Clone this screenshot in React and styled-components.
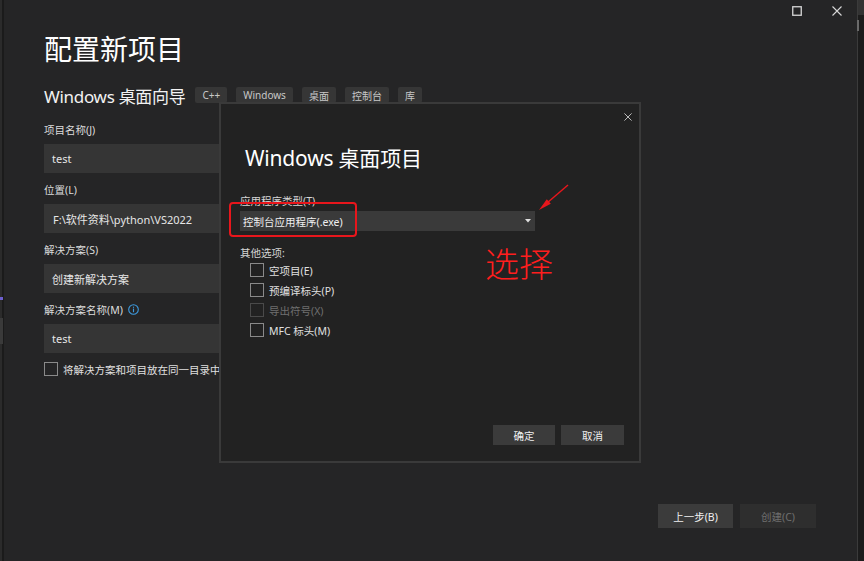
import React from "react";
import styled, { createGlobalStyle } from "styled-components";

const GlobalStyle = createGlobalStyle`
  html, body { margin: 0; padding: 0; background: #252526; }
  body {
    font-family: "Noto Sans", "Noto Sans CJK SC", sans-serif;
    color: #e8e8e8;
  }
  * { box-sizing: border-box; }
`;

const Window = styled.div`
  position: relative;
  display: flex;
  width: 864px;
  height: 561px;
  overflow: hidden;
  background: #252526;
`;

const LeftGutter = styled.div`
  position: relative;
  width: 4px;
  flex: none;
  background: linear-gradient(to right, #2b2b2b 0 2px, #1b1b1b 2px 4px);
`;

const GutterMark = styled.div`
  position: absolute;
  left: 0;
  width: 3px;
  top: ${(p) => p.$top}px;
  height: ${(p) => p.$h}px;
  background: ${(p) => p.$color};
`;

const Main = styled.div`
  flex: 1;
  display: flex;
  flex-direction: column;
  padding-left: 40px;
  min-width: 0;
`;

const ScrollTrack = styled.div`
  position: relative;
  width: 7px;
  flex: none;
  background: #1c1c1c;
  border-left: 1px solid #3b3b3b;
`;

const ScrollCap = styled.div`
  height: 15px;
  background: #333333;
`;

const ScrollThumb = styled.div`
  position: absolute;
  left: -1px;
  top: 20px;
  width: 2px;
  height: 11px;
  background: #6a6a6a;
`;

const TitleBar = styled.div`
  display: flex;
  justify-content: flex-end;
  height: 21px;
`;

const CaptionButton = styled.div`
  width: 40px;
  height: 21px;
  display: flex;
  align-items: center;
  justify-content: center;
  color: #d8d8d8;
`;

const Heading = styled.h1`
  margin: 8px 0 0;
  font-size: 28px;
  line-height: 40px;
  font-weight: 400;
  color: #ffffff;
`;

const SubRow = styled.div`
  display: flex;
  align-items: center;
  height: 24px;
  margin-top: 14px;
`;

const SubTitle = styled.div`
  font-size: 17px;
  letter-spacing: -0.3px;
  color: #f2f2f2;
  margin-right: 10px;
`;

const Tags = styled.div`
  display: flex;
  gap: 9px;
`;

const Tag = styled.span`
  height: 16px;
  padding: 0 7px;
  display: inline-flex;
  align-items: center;
  background: #363636;
  border-radius: 2px;
  font-size: 10px;
  color: #c8c8c8;
`;

const Form = styled.div`
  display: flex;
  flex-direction: column;
  gap: 8px;
  margin-top: 14px;
`;

const Field = styled.div`
  display: flex;
  flex-direction: column;
`;

const FieldLabel = styled.div`
  display: flex;
  align-items: center;
  gap: 5px;
  height: 16px;
  margin-bottom: 7px;
  font-size: 10.5px;
  color: #dcdcdc;
`;

const TextBox = styled.div`
  width: 480px;
  height: 29px;
  display: flex;
  align-items: center;
  padding-left: ${(p) => p.$pad || 8}px;
  background: #353535;
  font-size: 11px;
  color: #e6e6e6;
`;

const CheckRow = styled.label`
  display: flex;
  align-items: center;
  gap: ${(p) => p.$gap || 5}px;
  height: ${(p) => p.$h || 20}px;
  margin-top: ${(p) => p.$mt || 0}px;
  margin-left: ${(p) => p.$indent || 0}px;
  font-size: 10.5px;
  color: ${(p) => (p.$disabled ? "#6f6f6f" : "#e0e0e0")};
`;

const Box = styled.span`
  width: 14px;
  height: 14px;
  flex: none;
  border: 1px solid ${(p) => (p.$disabled ? "#4a4a4a" : "#8a8a8a")};
`;

const Footer = styled.div`
  margin-top: auto;
  display: flex;
  justify-content: flex-end;
  gap: 7px;
  padding: 0 41px 33px 0;
`;

const Button = styled.div`
  width: ${(p) => p.$w}px;
  height: ${(p) => p.$h || 24}px;
  display: flex;
  align-items: center;
  justify-content: center;
  background: ${(p) => (p.$disabled ? "#2e2e2e" : "#3b3b3b")};
  color: ${(p) => (p.$disabled ? "#6e6e6e" : "#f0f0f0")};
  font-size: 10.5px;
`;

/* modal dialog */
const Dialog = styled.div`
  position: absolute;
  left: 219px;
  top: 102px;
  width: 422px;
  height: 361px;
  display: flex;
  flex-direction: column;
  background: #222222;
  border: 2px solid #3a3a3a;
  padding: 0 15px 16px 19px;
`;

const DialogTop = styled.div`
  display: flex;
  justify-content: flex-end;
  height: 26px;
  padding-top: 9px;
  margin-right: -8px;
  color: #cfcfcf;
`;

const DialogTitle = styled.div`
  margin: 14px 0 0 5px;
  font-size: 21px;
  letter-spacing: -0.2px;
  line-height: 28px;
  color: #ffffff;
`;

const SmallLabel = styled.div`
  height: 14px;
  line-height: 14px;
  font-size: 10.5px;
  color: #d6d6d6;
  margin-top: ${(p) => p.$mt || 0}px;
`;

const Select = styled.div`
  width: 295px;
  height: 20px;
  margin-top: 3px;
  display: flex;
  align-items: center;
  justify-content: space-between;
  padding: 0 4px 0 3px;
  background: #3a3a3a;
  font-size: 10.5px;
  color: #f0f0f0;
`;

const DialogButtons = styled.div`
  margin-top: auto;
  display: flex;
  justify-content: flex-end;
  gap: 6px;
`;

/* red annotations drawn over the window */
const Marker = styled.div`
  position: absolute;
  left: 229px;
  top: 202px;
  width: 128px;
  height: 35px;
  border: 2px solid #e8161c;
  border-radius: 4px;
`;

const Pointer = styled.svg`
  position: absolute;
  left: 535px;
  top: 180px;
`;

const Note = styled.div`
  position: absolute;
  left: 485px;
  top: 244px;
  font-size: 34px;
  line-height: 40px;
  font-weight: 300;
  color: #ff1e1e;
`;

const MaxIcon = () => (
  <svg width="10" height="10" viewBox="0 0 10 10">
    <rect x="0.75" y="0.75" width="8.5" height="8.5" fill="none" stroke="currentColor" strokeWidth="1.3" />
  </svg>
);

const CloseIcon = ({ size = 10 }) => (
  <svg width={size} height={size} viewBox="0 0 10 10">
    <path d="M0.5 0.5 L9.5 9.5 M9.5 0.5 L0.5 9.5" stroke="currentColor" strokeWidth="1.1" />
  </svg>
);

const InfoIcon = () => (
  <svg width="11" height="11" viewBox="0 0 11 11">
    <circle cx="5.5" cy="5.5" r="4.8" fill="none" stroke="#3d9be0" strokeWidth="1.1" />
    <rect x="4.95" y="4.6" width="1.1" height="3.6" fill="#3d9be0" />
    <rect x="4.95" y="2.7" width="1.1" height="1.1" fill="#3d9be0" />
  </svg>
);

const Caret = () => (
  <svg width="6" height="4" viewBox="0 0 6 4">
    <path d="M0 0 H6 L3 3.5 Z" fill="#e0e0e0" />
  </svg>
);

const tags = ["C++", "Windows", "桌面", "控制台", "库"];
const options = [
  { text: "空项目(E)" },
  { text: "预编译标头(P)" },
  { text: "导出符号(X)", disabled: true },
  { text: "MFC 标头(M)" },
];

export default function App() {
  return (
    <>
      <GlobalStyle />
      <Window>
        <LeftGutter>
          <GutterMark $top={297} $h={3} $color="#6d5fcf" />
          <GutterMark $top={318} $h={26} $color="#3a3a3a" />
        </LeftGutter>

        <Main>
          <TitleBar>
            <CaptionButton><MaxIcon /></CaptionButton>
            <CaptionButton><CloseIcon /></CaptionButton>
          </TitleBar>

          <Heading>配置新项目</Heading>

          <SubRow>
            <SubTitle>Windows 桌面向导</SubTitle>
            <Tags>
              {tags.map((t) => (
                <Tag key={t}>{t}</Tag>
              ))}
            </Tags>
          </SubRow>

          <Form>
            <Field>
              <FieldLabel>项目名称(J)</FieldLabel>
              <TextBox>test</TextBox>
            </Field>
            <Field>
              <FieldLabel>位置(L)</FieldLabel>
              <TextBox $pad={9}>F:\软件资料\python\VS2022</TextBox>
            </Field>
            <Field>
              <FieldLabel>解决方案(S)</FieldLabel>
              <TextBox>创建新解决方案</TextBox>
            </Field>
            <Field>
              <FieldLabel>
                解决方案名称(M) <InfoIcon />
              </FieldLabel>
              <TextBox>test</TextBox>
            </Field>
            <CheckRow $gap={5} $h={14} $mt={1}>
              <Box />
              将解决方案和项目放在同一目录中(D)
            </CheckRow>
          </Form>

          <Footer>
            <Button $w={75}>上一步(B)</Button>
            <Button $w={76} $disabled>创建(C)</Button>
          </Footer>
        </Main>

        <ScrollTrack>
          <ScrollCap />
          <ScrollThumb />
        </ScrollTrack>

        <Dialog>
          <DialogTop>
            <CloseIcon size={8} />
          </DialogTop>
          <DialogTitle>Windows 桌面项目</DialogTitle>
          <SmallLabel $mt={22}>应用程序类型(T)</SmallLabel>
          <Select>
            控制台应用程序(.exe)
            <Caret />
          </Select>
          <SmallLabel $mt={15}>其他选项:</SmallLabel>
          {options.map((o) => (
            <CheckRow key={o.text} $indent={10} $disabled={o.disabled}>
              <Box $disabled={o.disabled} />
              {o.text}
            </CheckRow>
          ))}
          <DialogButtons>
            <Button $w={62} $h={20}>确定</Button>
            <Button $w={63} $h={20}>取消</Button>
          </DialogButtons>
        </Dialog>

        <Marker />
        <Pointer width="40" height="36" viewBox="0 0 40 36">
          <line x1="33" y1="5" x2="12" y2="23" stroke="#e8161c" strokeWidth="1.5" />
          <polygon points="4,30 15.8,23.8 11.8,19.2" fill="#e8161c" />
        </Pointer>
        <Note>选择</Note>
      </Window>
    </>
  );
}
